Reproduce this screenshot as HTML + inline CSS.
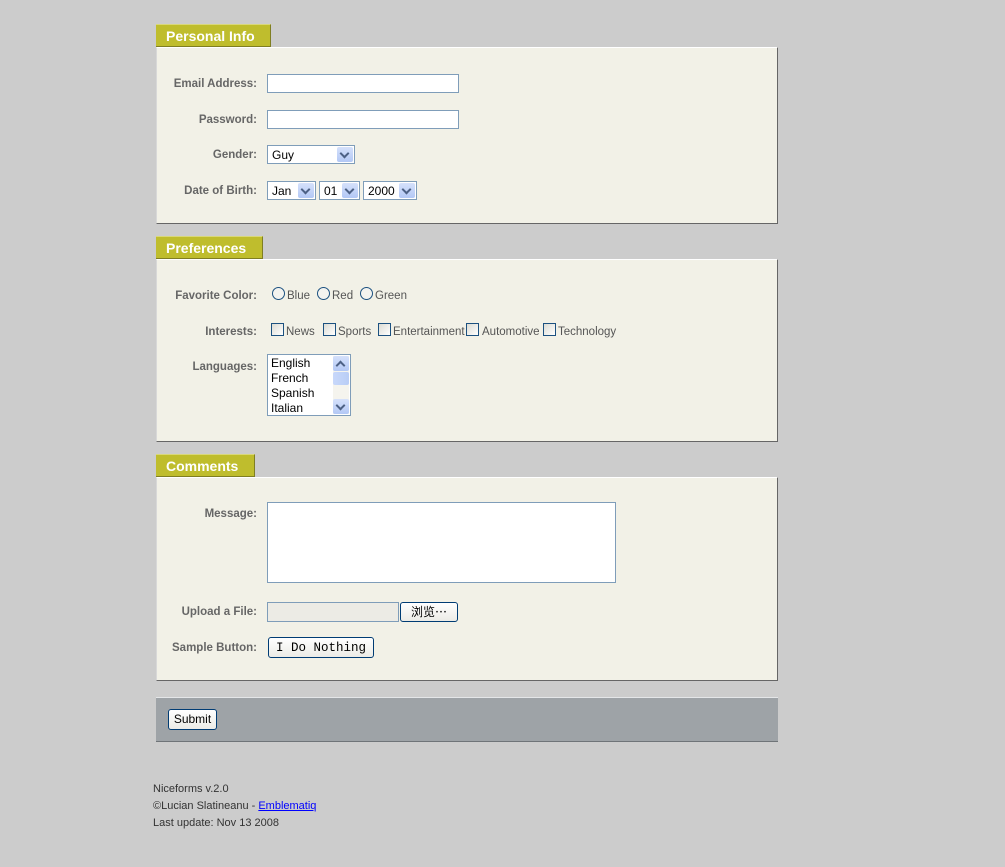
<!DOCTYPE html>
<html><head><meta charset="utf-8"><style>
*{margin:0;padding:0;box-sizing:border-box}
body{width:1005px;height:867px;background:#cccccc;position:relative;font-family:"Liberation Sans",Arial,sans-serif;overflow:hidden}
.a{position:absolute}
.leg{position:absolute;left:156px;height:23px;background:#bfbd2d;border-right:1px solid #7f7e22;border-bottom:1px solid #7f7e22;border-top:1px solid #d9d87a;color:#fff;font:bold 14px "Liberation Sans",Arial,sans-serif;padding:3px 0 0 10px;white-space:nowrap;overflow:hidden}
.pan{position:absolute;left:156px;width:622px;background:#f2f1e7;border-top:1px solid #fff;border-right:1px solid #666;border-bottom:1px solid #666;border-left:1px solid #d8d8d8}
.lab{position:absolute;right:748px;font:bold 11.5px "Liberation Sans",Arial,sans-serif;color:#666;white-space:nowrap}
.inp{position:absolute;background:#fff;border:1px solid #7f9db9}
.sel{position:absolute;background:#fff;border:1px solid #7f9db9;font:12px "Liberation Sans",Arial,sans-serif;color:#000;padding:2px 0 0 4px}
.arr{position:absolute;right:1px;top:1px;width:16px;bottom:1px;background:linear-gradient(#d5e1fb,#b3c8f5);border-radius:2px}
.arr:after{content:"";position:absolute;left:4px;top:3px;width:5px;height:5px;border-right:2px solid #4d6185;border-bottom:2px solid #4d6185;transform:rotate(45deg)}
.up:after{top:6px;transform:rotate(225deg)}
.opt{position:absolute;font:11.5px "Liberation Sans",Arial,sans-serif;color:#555}
.rad{position:absolute;width:13px;height:13px;border:1px solid #1c5180;border-radius:50%;background:#f3f3ef}
.chk{position:absolute;width:13px;height:13px;border:1px solid #1c5180;background:linear-gradient(135deg,#dcdcd4,#fff)}
.btn{position:absolute;background:linear-gradient(#fff,#ecebe6);border:1px solid #003c74;border-radius:3px;font-size:12px;color:#000;text-align:center}
</style></head><body>

<div class="leg" style="top:24px;width:115px">Personal Info</div>
<div class="pan" style="top:47px;height:177px"></div>
<div class="lab" style="top:78px">Email Address:</div>
<div class="inp" style="left:267px;top:74px;width:192px;height:19px"></div>
<div class="lab" style="top:114px">Password:</div>
<div class="inp" style="left:267px;top:110px;width:192px;height:19px"></div>
<div class="lab" style="top:149px">Gender:</div>
<div class="sel" style="left:267px;top:145px;width:88px;height:19px">Guy<div class="arr"></div></div>
<div class="lab" style="top:185px">Date of Birth:</div>
<div class="sel" style="left:267px;top:181px;width:49px;height:19px">Jan<div class="arr"></div></div>
<div class="sel" style="left:319px;top:181px;width:41px;height:19px">01<div class="arr"></div></div>
<div class="sel" style="left:363px;top:181px;width:54px;height:19px">2000<div class="arr"></div></div>

<div class="leg" style="top:236px;width:107px">Preferences</div>
<div class="pan" style="top:259px;height:183px"></div>
<div class="lab" style="top:290px">Favorite Color:</div>
<div class="rad" style="left:272px;top:287px"></div><div class="opt" style="left:287px;top:290px">Blue</div>
<div class="rad" style="left:317px;top:287px"></div><div class="opt" style="left:332px;top:290px">Red</div>
<div class="rad" style="left:360px;top:287px"></div><div class="opt" style="left:375px;top:290px">Green</div>
<div class="lab" style="top:326px">Interests:</div>
<div class="chk" style="left:271px;top:323px"></div><div class="opt" style="left:286px;top:326px">News</div>
<div class="chk" style="left:323px;top:323px"></div><div class="opt" style="left:338px;top:326px">Sports</div>
<div class="chk" style="left:378px;top:323px"></div><div class="opt" style="left:393px;top:326px">Entertainment</div>
<div class="chk" style="left:466px;top:323px"></div><div class="opt" style="left:482px;top:326px">Automotive</div>
<div class="chk" style="left:543px;top:323px"></div><div class="opt" style="left:558px;top:326px">Technology</div>
<div class="lab" style="top:361px">Languages:</div>
<div class="inp" style="left:267px;top:354px;width:84px;height:62px;font:12px 'Liberation Sans',Arial,sans-serif;line-height:15px;padding:1px 0 0 3px">English<br>French<br>Spanish<br>Italian
<div style="position:absolute;right:1px;top:1px;width:16px;bottom:1px;background:#f5f4ee">
<div class="arr up" style="top:0;right:0;bottom:auto;height:15px"></div>
<div style="position:absolute;top:16px;left:0;width:16px;height:13px;background:linear-gradient(90deg,#c8d8fa,#b9cdf6);border-radius:2px"></div>
<div class="arr" style="top:auto;bottom:0;right:0;height:15px"></div>
</div></div>

<div class="leg" style="top:454px;width:99px">Comments</div>
<div class="pan" style="top:477px;height:204px"></div>
<div class="lab" style="top:508px">Message:</div>
<div class="inp" style="left:267px;top:502px;width:349px;height:81px"></div>
<div class="lab" style="top:606px">Upload a File:</div>
<div class="inp" style="left:267px;top:602px;width:132px;height:20px;background:#ecebe5"></div>
<div class="btn" style="left:400px;top:602px;width:58px;height:20px;font-family:'Noto Sans CJK SC',sans-serif;line-height:18px">浏览…</div>
<div class="lab" style="top:642px">Sample Button:</div>
<div class="btn" style="left:268px;top:637px;width:106px;height:21px;font-family:'Liberation Mono',monospace;font-size:12.5px;line-height:20px">I Do Nothing</div>

<div class="a" style="left:156px;top:697px;width:622px;height:45px;background:#9ea3a7;border-top:1px solid #e4e6e8;border-bottom:1px solid #6f7478"></div>
<div class="btn" style="left:168px;top:709px;width:49px;height:21px;line-height:19px">Submit</div>

<div class="a" style="left:153px;top:781px;font-size:11px;color:#333;line-height:17px">Niceforms v.2.0<br>©Lucian Slatineanu - <span style="color:#00f;text-decoration:underline">Emblematiq</span><br>Last update: Nov 13 2008</div>
</body></html>
